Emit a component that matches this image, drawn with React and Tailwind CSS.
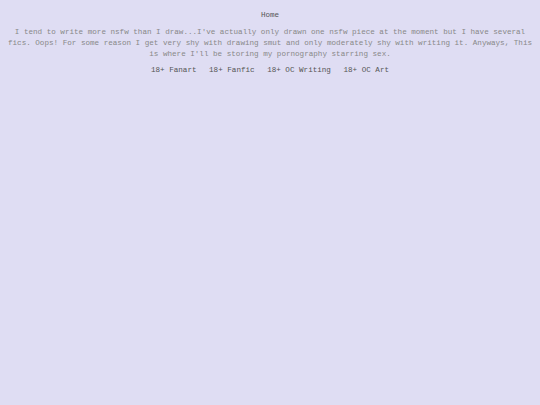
export default function App() {
  return (
    <div className="min-h-[405px] w-full bg-[#dfddf3] text-center text-[7.6px] leading-[11px] [font-family:'Liberation_Mono',monospace]">
      <div className="pt-[10px] text-[#555]">Home</div>
      <p className="mt-[6px] px-[5px] text-[#888]">
        I tend to write more nsfw than I draw...I've actually only drawn one nsfw piece at the moment but I have several fics. Oops! For some reason I get very shy with drawing smut and only moderately shy with writing it. Anyways, This is where I'll be storing my pornography starring sex.
      </p>
      <div className="mt-[5px] flex justify-center gap-[12.5px] text-[#555]">
        <span>18+ Fanart</span>
        <span>18+ Fanfic</span>
        <span>18+ OC Writing</span>
        <span>18+ OC Art</span>
      </div>
    </div>
  );
}
